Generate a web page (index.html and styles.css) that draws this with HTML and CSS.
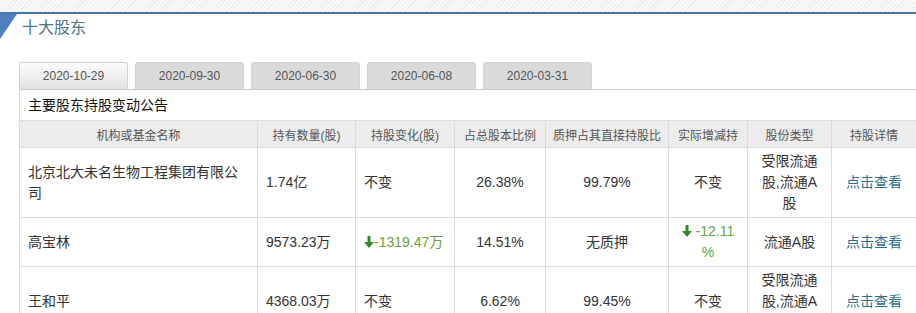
FILE: index.html
```html
<!DOCTYPE html>
<html lang="zh-CN">
<head>
<meta charset="utf-8">
<title>十大股东</title>
<link rel="stylesheet" href="styles.css">
</head>
<body>
<div class="topbar"></div>
<div class="header">
  <svg class="corner" width="17" height="25" viewBox="0 0 17 25"><polygon points="0,0 17,0 0,25" fill="#4f7fc0"/></svg>
  <h2 class="title">十大股东</h2>
</div>
<div class="tabs">
  <div class="tab active">2020-10-29</div>
  <div class="tab">2020-09-30</div>
  <div class="tab">2020-06-30</div>
  <div class="tab">2020-06-08</div>
  <div class="tab">2020-03-31</div>
</div>
<div class="box">
  <div class="caption">主要股东持股变动公告</div>
  <table class="holders">
    <colgroup>
      <col class="c1"><col class="c2"><col class="c3"><col class="c4"><col class="c5"><col class="c6"><col class="c7"><col class="c8">
    </colgroup>
    <thead>
      <tr>
        <th>机构或基金名称</th>
        <th>持有数量(股)</th>
        <th>持股变化(股)</th>
        <th>占总股本比例</th>
        <th>质押占其直接持股比</th>
        <th>实际增减持</th>
        <th>股份类型</th>
        <th>持股详情</th>
      </tr>
    </thead>
    <tbody>
      <tr class="r1">
        <td class="left">北京北大未名生物工程集团有限公司</td>
        <td class="left">1.74亿</td>
        <td class="left">不变</td>
        <td>26.38%</td>
        <td>99.79%</td>
        <td>不变</td>
        <td class="type">受限流通股,流通A股</td>
        <td><a class="link" href="#">点击查看</a></td>
      </tr>
      <tr class="r2">
        <td class="left">高宝林</td>
        <td class="left">9573.23万</td>
        <td class="left down"><svg class="arrow" width="10" height="12" viewBox="0 0 10 12"><polygon points="3.5,0 6.5,0 6.5,6 10,6 5,12 0,6 3.5,6" fill="#2f8a2f"/></svg>-1319.47万</td>
        <td>14.51%</td>
        <td>无质押</td>
        <td class="down"><svg class="arrow" width="10" height="12" viewBox="0 0 10 12"><polygon points="3.5,0 6.5,0 6.5,6 10,6 5,12 0,6 3.5,6" fill="#2f8a2f"/></svg> -12.11<br>%</td>
        <td>流通A股</td>
        <td><a class="link" href="#">点击查看</a></td>
      </tr>
      <tr class="r3">
        <td class="left">王和平</td>
        <td class="left">4368.03万</td>
        <td class="left">不变</td>
        <td>6.62%</td>
        <td>99.45%</td>
        <td>不变</td>
        <td class="type">受限流通股,流通A股</td>
        <td><a class="link" href="#">点击查看</a></td>
      </tr>
    </tbody>
  </table>
</div>
</body>
</html>
```
FILE: styles.css
```css
html, body {
  margin: 0;
  padding: 0;
  background: #fff;
}
body {
  width: 916px;
  overflow: hidden;
  font-family: "Liberation Sans", "Noto Sans CJK SC", sans-serif;
  color: #333;
}
.topbar {
  height: 12px;
  background: repeating-linear-gradient(135deg, #ececec 0 1px, #fafafa 1px 3px);
}
.header {
  height: 48px;
  border-top: 2px solid #4a74ac;
  display: flex;
  align-items: flex-start;
}
.corner {
  display: block;
  flex: none;
}
.title {
  margin: 4px 0 0 5px;
  font-size: 16px;
  line-height: 20px;
  font-weight: normal;
  color: #4d7590;
}
.tabs {
  margin-left: 19px;
  height: 27px;
  display: flex;
  gap: 7px;
  border-bottom: 1px solid #c9c9c9;
}
.tab {
  width: 107px;
  height: 26px;
  border: 1px solid #d4d4d4;
  border-bottom: none;
  border-radius: 3px 3px 0 0;
  background: #dadada;
  font-size: 12px;
  line-height: 26px;
  text-align: center;
  color: #555;
}
.tab.active {
  background: linear-gradient(#fdfdfd, #e1e1e1);
  border-color: #d0d0d0;
}
.box {
  margin-left: 19px;
  border-left: 1px solid #dcdcdc;
}
.caption {
  height: 30px;
  line-height: 30px;
  padding-left: 8px;
  font-size: 14px;
  color: #111;
}
.holders {
  border-collapse: collapse;
  table-layout: fixed;
  width: 897px;
  margin-left: -1px;
}
.c1 { width: 238px; }
.c2 { width: 98px; }
.c3 { width: 99px; }
.c4 { width: 91px; }
.c5 { width: 123px; }
.c6 { width: 79px; }
.c7 { width: 84px; }
.c8 { width: 85px; }
.holders th {
  height: 26px;
  padding: 0;
  background: #ececec;
  border: 1px solid #dadada;
  font-size: 12px;
  font-weight: normal;
  color: #555;
  text-align: center;
}
.holders td {
  padding: 3px 8px;
  border: 1px solid #dcdcdc;
  font-size: 14px;
  line-height: 21px;
  color: #333;
  text-align: center;
  vertical-align: middle;
}
.holders td.left {
  text-align: left;
}
.r1 td { height: 63px; }
.r2 td { height: 42px; }
.r3 td { height: 63px; }
.holders td.down {
  color: #67a337;
}
.arrow {
  display: inline-block;
  vertical-align: -1px;
}
.link {
  color: #2d6f92;
  text-decoration: none;
}
```
